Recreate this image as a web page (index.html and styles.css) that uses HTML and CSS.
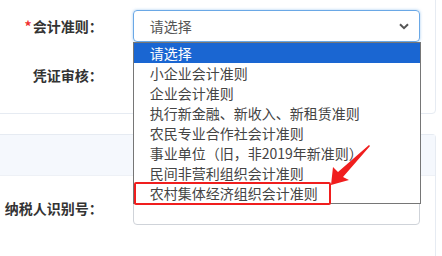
FILE: index.html
```html
<!DOCTYPE html>
<html lang="zh-CN">
<head>
  <meta charset="UTF-8">
  <title>账套设置</title>
  <link rel="stylesheet" href="styles.css">
</head>
<body>
<div class="card card-top">
  <div class="form-row">
    <label class="form-label"><span class="req">*</span>会计准则：</label>
    <div class="control">
      <div class="select-box">
        <span>请选择</span>
        <svg class="chevron" width="10" height="7" viewBox="0 0 10 7"><path d="M1 1.2 L5 5.2 L9 1.2" fill="none" stroke="#555" stroke-width="2"/></svg>
      </div>
      <ul class="dropdown">
        <li class="active">请选择</li>
        <li>小企业会计准则</li>
        <li>企业会计准则</li>
        <li>执行新金融、新收入、新租赁准则</li>
        <li>农民专业合作社会计准则</li>
        <li>事业单位（旧，非2019年新准则）</li>
        <li>民间非营利组织会计准则</li>
        <li>农村集体经济组织会计准则</li>
        <div class="mark-box"></div>
      </ul>
    </div>
  </div>
  <div class="form-row">
    <label class="form-label">凭证审核：</label>
    <div class="control"></div>
  </div>
</div>

<div class="card card-bottom">
  <div class="card-head"></div>
  <div class="card-body">
    <div class="form-row">
      <label class="form-label">纳税人识别号：</label>
      <div class="control">
        <div class="text-input"></div>
      </div>
    </div>
  </div>
</div>

<svg class="arrow" width="50" height="50" viewBox="0 0 50 50">
  <polygon points="6,45 8,27 13,32 44,5 45,6 18,37 24,40" fill="#f01e1e"/>
</svg>
</body>
</html>
```

FILE: styles.css
```css
body {
  margin: 0;
  background-color: #ffffff;
  font-family: "Noto Sans CJK SC", "Noto Sans", sans-serif;
  font-size: 14px;
  color: #333;
  position: relative;
}

.card {
  border: 1px solid #e6ebf2;
  border-radius: 4px;
  background-color: #fff;
  margin-right: 6px;
  margin-left: -10px;
}

.card-top {
  margin-top: -10px;
  padding: 19px 15px 22px 0;
}

.card-bottom {
  margin-top: 20px;
  border-bottom: none;
}

.card-head {
  height: 40px;
  background-color: #f5f8fd;
  border-bottom: 1px solid #eef1f6;
}

.card-body {
  padding: 16px 15px 40px 0;
}

.form-row {
  display: flex;
  align-items: center;
  height: 32px;
}

.form-row + .form-row {
  margin-top: 17px;
}

.form-label {
  width: 112px;
  text-align: right;
  font-weight: bold;
  color: #333;
  margin-right: 30px;
  white-space: nowrap;
}

.req {
  color: #f03030;
  margin-right: 1px;
}

.control {
  position: relative;
  width: 288px;
  height: 32px;
}

.select-box {
  box-sizing: border-box;
  height: 32px;
  border: 1px solid #6aa8e6;
  border-radius: 4px;
  box-shadow: 0 0 3px rgba(102, 168, 230, 0.6);
  padding: 0 10px 0 16px;
  display: flex;
  align-items: center;
  justify-content: space-between;
  color: #555;
}

.chevron {
  margin-top: 1px;
}

.dropdown {
  position: absolute;
  top: 32px;
  left: 0;
  width: 288px;
  box-sizing: border-box;
  margin: 0;
  padding: 0;
  list-style: none;
  background-color: #fff;
  border: 1px solid #767676;
  z-index: 5;
}

.dropdown li {
  height: 20px;
  line-height: 20px;
  padding-left: 16px;
  color: #444;
  white-space: nowrap;
}

.dropdown li.active {
  background-color: #1a66d2;
  color: #fff;
}

.mark-box {
  position: absolute;
  left: 0;
  top: 139px;
  width: 197px;
  height: 23px;
  box-sizing: border-box;
  border: 2px solid #f01e1e;
  border-radius: 2px;
}

.text-input {
  box-sizing: border-box;
  height: 33px;
  border: 1px solid #cfd3d9;
  border-radius: 4px;
}

.arrow {
  position: absolute;
  left: 325px;
  top: 140px;
  z-index: 6;
}
```
